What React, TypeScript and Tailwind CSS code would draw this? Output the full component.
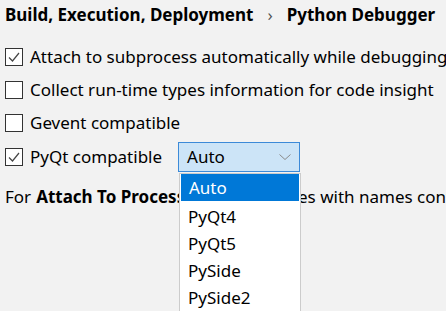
import { useState } from "react"

const font = { fontFamily: '"Noto Sans", "Open Sans", sans-serif' }

function Check({ checked }: { checked: boolean }) {
  return (
    <span className="flex h-[18px] w-[18px] shrink-0 items-center justify-center border border-[#333333] bg-white">
      {checked && (
        <svg width="14" height="14" viewBox="0 0 14 14" fill="none">
          <path d="M2 7.5 L5.5 11 L12 3" stroke="#444444" strokeWidth="1.2" />
        </svg>
      )}
    </span>
  )
}

function Row({ label, checked, children, h = "h-[33px]" }: { label: string; checked: boolean; children?: React.ReactNode; h?: string }) {
  return (
    <div className={`flex items-center pl-[5px] ${h}`}>
      <Check checked={checked} />
      <span className="ml-[7px] whitespace-nowrap">{label}</span>
      {children}
    </div>
  )
}

export default function App() {
  const [value] = useState("Auto")
  const options = ["PyQt4", "PyQt5", "PySide", "PySide2"]

  return (
    <div className="relative h-[311px] w-[446px] overflow-hidden bg-[#f2f2f2] text-[17px] text-black" style={font}>
      <div className="flex h-[40px] items-start whitespace-nowrap pl-[5px] pt-[2px] font-bold">
        <span>Build, Execution, Deployment</span>
        <span className="mx-[14px] font-normal text-[#555555]">›</span>
        <span>Python Debugger</span>
      </div>

      <Row label="Attach to subprocess automatically while debugging" checked />
      <Row label="Collect run-time types information for code insight" checked={false} />
      <Row label="Gevent compatible" checked={false} />
      <Row label="PyQt compatible" checked h="h-[36px]">
        <div className="ml-[16px] flex h-[30px] w-[122px] items-center justify-between border border-[#3c8ad8] bg-[#cce4f7] pl-[8px] pr-[8px]">
          <span>{value}</span>
          <svg width="12" height="6" viewBox="0 0 12 6" fill="none">
            <path d="M0.5 0.5 L6 5.5 L11.5 0.5" stroke="#8a8a8a" strokeWidth="1" />
          </svg>
        </div>
      </Row>

      <div className="flex h-[44px] items-center whitespace-nowrap pl-[5px]">
        For <b className="mx-[5px]">Attach To Process</b> show processes with names containing:
      </div>

      <div className="absolute left-[179px] top-[173px] w-[122px] border border-[#cccccc] bg-white pb-[10px]">
        <div className="mx-[1px] flex h-[27px] items-center bg-[#0078d7] pl-[8px] text-white">Auto</div>
        <div className="pt-[2px]">
          {options.map((o) => (
            <div key={o} className="flex h-[27px] items-center pl-[8px]">
              {o}
            </div>
          ))}
        </div>
      </div>
    </div>
  )
}
